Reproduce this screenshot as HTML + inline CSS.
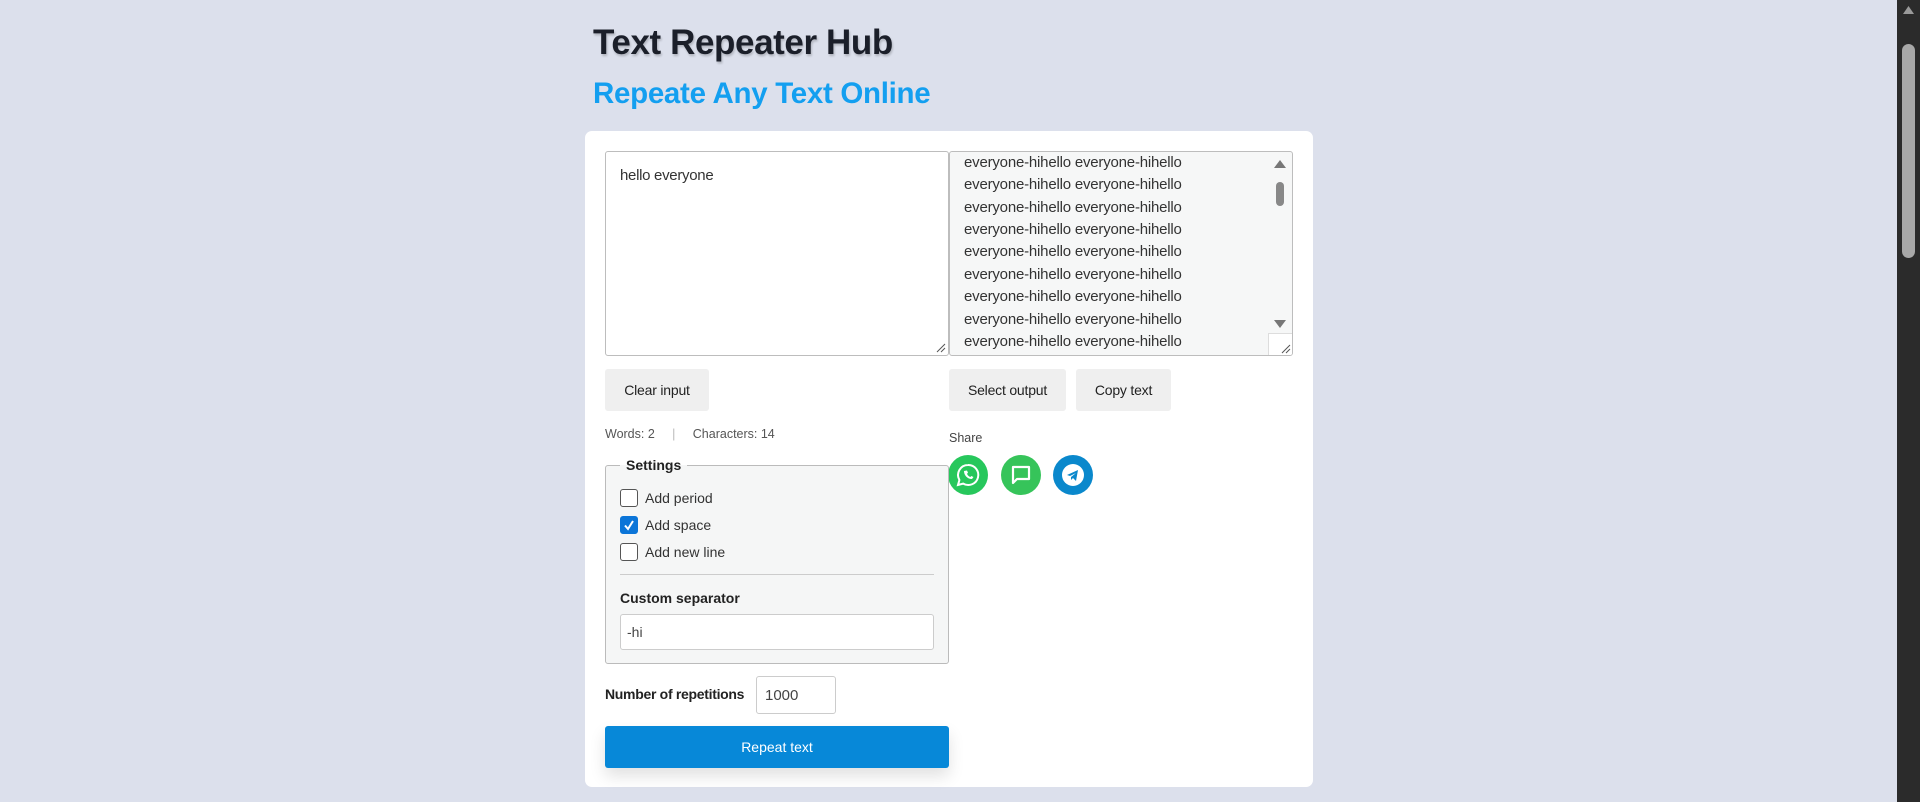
<!DOCTYPE html>
<html><head><meta charset="utf-8"><style>
*{box-sizing:border-box;margin:0;padding:0}
body{width:1920px;height:802px;background:#dce0ec;font-family:"Liberation Sans",sans-serif;position:relative;overflow:hidden;color:#222}
.a{position:absolute}
h1{position:absolute;left:593px;top:23px;font-size:35px;font-weight:bold;color:#1b1f2a;letter-spacing:-0.4px;text-shadow:1px 2px 2px rgba(0,0,0,.2)}
h2{position:absolute;left:593px;top:77px;font-size:29.5px;font-weight:bold;color:#139ff0;letter-spacing:-0.3px}
.card{left:585px;top:131px;width:728px;height:656px;background:#fff;border-radius:7px}
.ta{border:1px solid #bdbdbd;border-radius:3px}
.out{background:#f6f7f7;overflow:hidden}
.out div{position:absolute;left:14px;font-size:15px;color:#333;letter-spacing:-0.2px;white-space:nowrap}
.btn{background:#efefef;border-radius:3px;font-size:14px;color:#222;text-align:center;line-height:42px;letter-spacing:-0.2px}
.small{font-size:12.5px;color:#555}
.cb{width:18px;height:18px;border:1px solid #555;border-radius:3px;background:#fff}
.lbl{font-size:14px;color:#333}
.circ{width:40px;height:40px;border-radius:50%}
</style></head><body>
<h1>Text Repeater Hub</h1>
<h2>Repeate Any Text Online</h2>
<div class="a card"></div>
<div class="a ta" style="left:605px;top:151px;width:344px;height:205px;background:#fff"><svg class="a" style="left:330px;top:191px" width="10" height="10"><path d="M1 9L9 1M5 9L9 5" stroke="#555" stroke-width="1"/></svg></div>
<div class="a" style="left:620px;top:167px;font-size:15px;color:#333;letter-spacing:-0.3px">hello everyone</div>
<div class="a ta out" style="left:949px;top:151px;width:344px;height:205px">
<div style="top:2px">everyone-hihello everyone-hihello</div>
<div style="top:24px">everyone-hihello everyone-hihello</div>
<div style="top:47px">everyone-hihello everyone-hihello</div>
<div style="top:69px">everyone-hihello everyone-hihello</div>
<div style="top:91px">everyone-hihello everyone-hihello</div>
<div style="top:114px">everyone-hihello everyone-hihello</div>
<div style="top:136px">everyone-hihello everyone-hihello</div>
<div style="top:159px">everyone-hihello everyone-hihello</div>
<div style="top:181px">everyone-hihello everyone-hihello</div>
<svg class="a" style="left:322px;top:4px" width="16" height="180"><path d="M2 12L8 4L14 12Z" fill="#777"/><rect x="4" y="26" width="8" height="24" rx="4" fill="#888"/><path d="M2 164L8 172L14 164Z" fill="#777"/></svg>
<div class="a" style="left:318px;top:181px;width:24px;height:22px;background:#fff;border-left:1px solid #ddd;border-top:1px solid #ddd"><svg class="a" style="left:12px;top:10px" width="10" height="10"><path d="M1 9L9 1M5 9L9 5" stroke="#555" stroke-width="1"/></svg></div>
</div>
<div class="a btn" style="left:605px;top:369px;width:104px;height:42px">Clear input</div>
<div class="a btn" style="left:949px;top:369px;width:117px;height:42px">Select output</div>
<div class="a btn" style="left:1076px;top:369px;width:95px;height:42px">Copy text</div>
<div class="a small" style="left:605px;top:427px">Words: 2 &nbsp;&nbsp;&nbsp;&nbsp;<span style="color:#bbb">|</span>&nbsp;&nbsp;&nbsp;&nbsp; Characters: 14</div>
<div class="a small" style="left:949px;top:431px;color:#444">Share</div>
<div class="a circ" style="left:948px;top:455px;background:#27c75c"><svg width="40" height="40"><path d="M20 10a10 10 0 0 0-8.6 15l-1.4 5 5.2-1.4A10 10 0 1 0 20 10z" fill="none" stroke="#fff" stroke-width="2"/><path d="M16 16c0 4 3 8 8 8l1.5-2-2.2-1-1 1c-1.5-.6-2.7-1.8-3.3-3.3l1-1-1-2.2z" fill="#fff"/></svg></div>
<div class="a circ" style="left:1001px;top:455px;background:#36c45a"><svg width="40" height="40"><path d="M12 12h16v12H16l-4 4z" fill="none" stroke="#fff" stroke-width="2.2" stroke-linejoin="round"/></svg></div>
<div class="a circ" style="left:1053px;top:455px;background:#0a88cc"><svg width="40" height="40"><circle cx="20" cy="20" r="11" fill="#fff"/><path d="M14 20l11-5-2 11-3-3-2 2v-3l5-4-6 3z" fill="#0a88cc"/></svg></div>
<div class="a" style="left:605px;top:465px;width:344px;height:199px;border:1px solid #bbb;border-radius:3px;background:#f5f6f6"></div>
<div class="a" style="left:620px;top:457px;padding:0 6px;background:linear-gradient(#fff 50%,#f5f6f6 50%);font-size:14px;font-weight:bold;color:#222">Settings</div>
<div class="a cb" style="left:620px;top:489px"></div><div class="a lbl" style="left:645px;top:490px">Add period</div>
<div class="a cb" style="left:620px;top:516px;background:#0b75d8;border-color:#0b75d8"><svg width="16" height="16" style="position:absolute;left:0;top:0"><path d="M4 8.5l3 3.5 5-8" fill="none" stroke="#fff" stroke-width="2"/></svg></div><div class="a lbl" style="left:645px;top:517px">Add space</div>
<div class="a cb" style="left:620px;top:543px"></div><div class="a lbl" style="left:645px;top:544px">Add new line</div>
<div class="a" style="left:620px;top:574px;width:314px;height:1px;background:#ccc"></div>
<div class="a lbl" style="left:620px;top:590px;font-weight:bold;color:#222">Custom separator</div>
<div class="a" style="left:620px;top:614px;width:314px;height:36px;background:#fff;border:1px solid #ccc;border-radius:3px;font-size:14px;color:#444;padding:9px 6px">-hi</div>
<div class="a lbl" style="left:605px;top:686px;font-weight:bold;color:#222;letter-spacing:-0.3px">Number of repetitions</div>
<div class="a" style="left:756px;top:676px;width:80px;height:38px;background:#fff;border:1px solid #ccc;border-radius:3px;font-size:15px;color:#444;padding:10px 8px">1000</div>
<div class="a" style="left:605px;top:726px;width:344px;height:42px;background:#0788d8;border-radius:3px;color:#fff;font-size:14px;text-align:center;line-height:42px;box-shadow:0 8px 16px rgba(0,0,0,.12)">Repeat text</div>
<div class="a" style="left:1897px;top:0;width:23px;height:802px;background:#2b2b2b"><svg width="23" height="20"><path d="M6 14L11.5 6L17 14Z" fill="#9a9a9a"/></svg><div class="a" style="left:5px;top:44px;width:13px;height:214px;border-radius:7px;background:#a8a8a8"></div></div>
</body></html>
